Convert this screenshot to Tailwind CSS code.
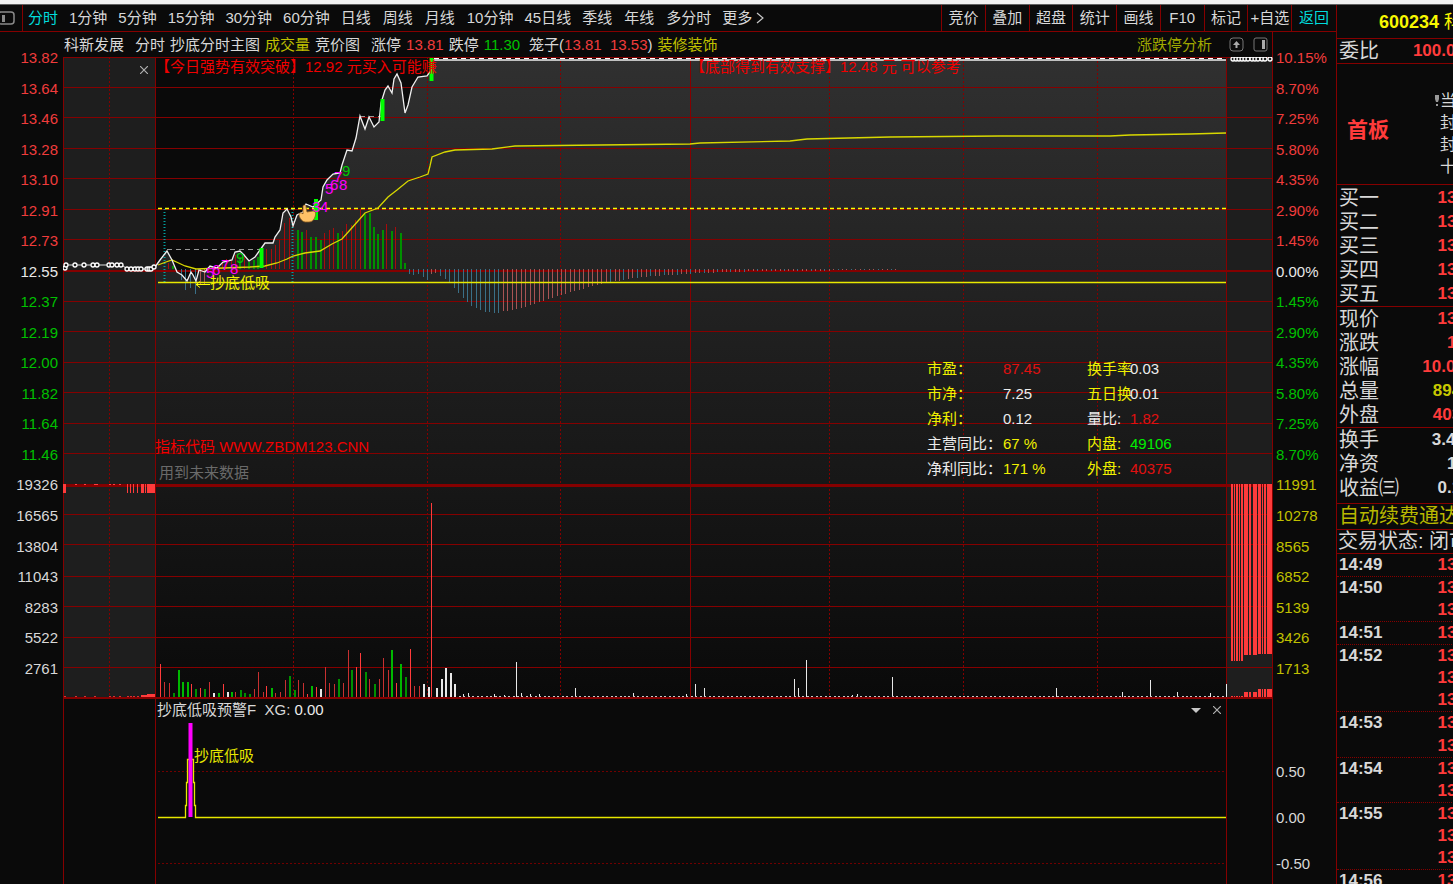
<!DOCTYPE html>
<html lang="zh-CN">
<head>
    <meta charset="UTF-8">
    <meta name="viewport" content="width=device-width, initial-scale=1.0">
    <title>科新发展 600234 - 分时</title>
    <script src="https://cdn.jsdelivr.net/npm/@tailwindcss/browser@4"></script>
</head>
<body class="h-screen overflow-hidden bg-[#0a0a0a] text-[#d8d8d8] text-[15px] leading-4 whitespace-nowrap font-['Liberation_Sans','Noto_Sans_CJK_SC',sans-serif]">
    <div class="h-full flex flex-col">
        <!-- Window edge -->
        <div class="h-[5px] shrink-0 bg-[#f0f0f0] border-b border-[#606060]"></div>

        <div class="flex-1 min-h-0 flex">
            <!-- Chart side -->
            <main class="flex-1 min-w-0 flex flex-col">
                <!-- Toolbar -->
                <header class="h-[27px] shrink-0 flex border-b border-[#850000]">
                    <button aria-label="侧栏" class="w-[23px] border-r border-[#850000]">
                        <svg class="w-[15px] h-[15px]" viewBox="0 0 15 15" fill="none" stroke="#8a8a8a"><rect x="-2" y="1" width="16" height="12" rx="3" stroke-width="1.5"/><rect x="2" y="4" width="3" height="7" fill="#8a8a8a" stroke="none"/></svg>
                    </button>
                    <nav class="flex items-center gap-[11px] pl-[5px]">
                        <button class="text-[#00dcdc]">分时</button>
                        <button>1分钟</button>
                        <button>5分钟</button>
                        <button>15分钟</button>
                        <button>30分钟</button>
                        <button>60分钟</button>
                        <button class="w-[31px] text-left">日线</button>
                        <button class="w-[31px] text-left">周线</button>
                        <button class="w-[31px] text-left">月线</button>
                        <button>10分钟</button>
                        <button>45日线</button>
                        <button class="w-[31px] text-left">季线</button>
                        <button class="w-[31px] text-left">年线</button>
                        <button>多分时</button>
                        <button class="flex items-center gap-1">更多
                            <svg class="w-2 h-3" viewBox="0 0 8 12" fill="none" stroke="#c8c8c8" stroke-width="1.2"><path d="M1 1l6 5-6 5"/></svg>
                        </button>
                    </nav>
                    <nav class="ml-auto w-[395px] grid grid-cols-9 divide-x divide-[#850000] border-l border-[#850000]">
                        <button>竞价</button>
                        <button>叠加</button>
                        <button>超盘</button>
                        <button>统计</button>
                        <button>画线</button>
                        <button>F10</button>
                        <button>标记</button>
                        <button>+自选</button>
                        <button class="text-[#00dcdc]">返回</button>
                    </nav>
                </header>

                <!-- Indicator names -->
                <div class="h-[25px] shrink-0 flex">
                    <div class="flex-1 flex items-center pl-16 pr-1 gap-[5px]">
                        <span>科新发展</span>
                        <span class="ml-[6px]">分时</span>
                        <span>抄底分时主图</span>
                        <span class="text-[#c0c000]">成交量</span>
                        <span>竞价图</span>
                        <span class="ml-[6px]">涨停</span>
                        <span class="text-[#f03c3c]">13.81</span>
                        <span>跌停</span>
                        <span class="text-[#00c000]">11.30</span>
                        <span class="ml-1">笼子(<span class="text-[#f03c3c]">13.81&nbsp; 13.53</span>)</span>
                        <span class="text-[#c0c000]">装修装饰</span>
                        <a href="#" class="ml-auto text-[#a0a800]">涨跌停分析</a>
                        <button aria-label="上移" class="ml-3">
                            <svg class="w-[15px] h-[15px]" viewBox="0 0 15 15"><rect x="1" y="1" width="13" height="13" rx="3" fill="none" stroke="#777"/><path d="M7.5 4l3.500 4H8.500v3h-2V8H4z" fill="#aaa"/></svg>
                        </button>
                        <button aria-label="右栏" class="ml-1">
                            <svg class="w-[15px] h-[15px]" viewBox="0 0 15 15"><rect x="1" y="1" width="13" height="13" rx="2" fill="none" stroke="#777"/><rect x="9" y="3" width="3" height="9" fill="#aaa"/></svg>
                        </button>
                    </div>
                    <div class="w-16 border-l border-[#850000]"></div>
                </div>

                <!-- Price and volume -->
                <section class="flex-[641] min-h-0 grid grid-cols-[63px_1fr_63px] grid-rows-[minmax(0,1fr)]">
                    <ol class="-mt-[7px] mb-[7px] pr-[5px] flex flex-col text-right text-[#f03c3c] *:flex-1">
                        <li>13.82</li>
                        <li>13.64</li>
                        <li>13.46</li>
                        <li>13.28</li>
                        <li>13.10</li>
                        <li>12.91</li>
                        <li>12.73</li>
                        <li class="text-[#e8e8e8]">12.55</li>
                        <li class="text-[#00c000]">12.37</li>
                        <li class="text-[#00c000]">12.19</li>
                        <li class="text-[#00c000]">12.00</li>
                        <li class="text-[#00c000]">11.82</li>
                        <li class="text-[#00c000]">11.64</li>
                        <li class="text-[#00c000]">11.46</li>
                        <li class="text-[#d8d8d8]">19326</li>
                        <li class="text-[#d8d8d8]">16565</li>
                        <li class="text-[#d8d8d8]">13804</li>
                        <li class="text-[#d8d8d8]">11043</li>
                        <li class="text-[#d8d8d8]">8283</li>
                        <li class="text-[#d8d8d8]">5522</li>
                        <li class="text-[#d8d8d8]">2761</li>
                    </ol>

                    <div class="relative">
                        <svg class="absolute inset-0 w-full h-full" viewBox="63 57 1210 641" preserveAspectRatio="none">
                            <defs>
                                <linearGradient id="area" gradientUnits="userSpaceOnUse" x1="0" y1="57" x2="0" y2="698">
                                    <stop offset="0" stop-color="#303030"/>
                                    <stop offset="0.450" stop-color="#1f1f1f"/>
                                    <stop offset="1" stop-color="#0a0a0a"/>
                                </linearGradient>
                            </defs>
                            <rect x="63" y="57" width="92" height="641" fill="#1e1e1e"/>
                            <rect x="1227" y="57" width="46" height="641" fill="#1e1e1e"/>
                            <path id="fill" fill="url(#area)"/>
                            <g id="grid" fill="#850000" shape-rendering="crispEdges"></g>
                            <g id="bars" shape-rendering="crispEdges"></g>

                            <!-- levels -->
                            <path d="M164.500 209v74M292.500 209v74" stroke="#00a0a0" stroke-width="2" stroke-dasharray="1 2"/>
                            <path d="M167 249.500h95M360 116.500h22" stroke="#999" stroke-dasharray="5 4"/>
                            <path d="M158 208.500h1068" stroke="#ffff00" stroke-width="1.300" stroke-dasharray="4 3"/>
                            <path d="M158 282.500h1068" stroke="#e8e800" stroke-width="1.500"/>

                            <!-- average and price -->
                            <polyline fill="none" stroke="#d8d800" stroke-width="1.300" points="158,265 166,262 172,260 185,266 196,269 250,267 265,266 277,263 287,259 293,256 305,253 320,251 332,244 342,239 350,230 358,221 365,213 378,208 388,197 397,190 408,181 420,177 428,174 430,166 432,157 445,152 455,150 492,149 515,146 600,145 690,144 700,143 790,141 807,139 890,137 1000,136 1110,136 1130,135 1190,134 1226,133"/>
                            <polyline id="price" fill="none" stroke="#f0f0f0" stroke-width="1.300" points="155,267 160,260 167,251 172,260 177,272 182,275 187,281 191,272 193,275 196,281 199,270 205,272 210,266 217,268 223,262 232,260 235,252 240,251 244,255 249,261 255,257 260,250 265,243 273,243 275,237 280,230 283,213 287,209 291,217 293,226 297,215 303,212 306,204 313,207 321,200 323,187 327,180 333,174 340,173 342,165 347,150 352,151 356,138 360,116 365,129 369,117 374,127 379,122 381,103 385,90 388,86 392,93 394,79 397,74 401,83 405,113 408,105 412,87 418,77 427,76 430,72 432,60 1226,60"/>
                            <path d="M434 58.500h792" stroke="#fff" stroke-dasharray="5 4"/>
                            <polyline fill="none" stroke="#e0e0e0" points="63,269 66,265 122,265 127,269 151,269 155,266"/>
                            <g id="auction" fill="#1e1e1e" stroke="#fff" stroke-width="1.300"></g>

                            <!-- signals -->
                            <path d="M261.500 248v20M316 199v21M382.500 99v22M431.500 58v23" stroke="#00ff00" stroke-width="4"/>
                            <g fill="#ff00ff" font-size="15">
                                <text x="206" y="278">5</text>
                                <text x="212" y="275">6</text>
                                <text x="221" y="270">7</text>
                                <text x="230" y="274">8</text>
                                <text x="312" y="212">3</text>
                                <text x="320" y="212">4</text>
                                <text x="325" y="194">5</text>
                                <text x="330" y="190">6</text>
                                <text x="334" y="182">7</text>
                                <text x="339" y="190">8</text>
                            </g>
                            <g fill="#00c800" font-size="15">
                                <text x="236" y="263">9</text>
                                <text x="342" y="176">9</text>
                            </g>
                            <path d="M196 284.500h14M196 284.500l4-3M196 284.500l4 3" fill="none" stroke="#ffff00"/>
                            <path d="M303 206c1-2 3-1 3 1l1 5 6-1c3 0 3 3 2 6s-3 5-6 5h-4c-4-1-6-5-6-8 1-2 3-1 4 0z" fill="#ffc266" stroke="#8a5a20" stroke-width="0.800"/>
                        </svg>

                        <button aria-label="关闭" class="absolute left-[76px] top-2 p-[1px]">
                            <svg class="w-2 h-2" viewBox="0 0 8 8" stroke="#b0b0b0" stroke-width="1.2"><path d="M0 0l8 8M8 0l-8 8"/></svg>
                        </button>
                        <p class="absolute left-[92px] top-[2px] text-[#f00000]">【今日强势有效突破】12.92 元买入可能赚</p>
                        <p class="absolute left-[627px] top-[2px] text-[#f00000]">【底部得到有效支撑】12.48 元 可以参考</p>
                        <p class="absolute left-[147px] top-[218px] text-[#f0f000]">抄底低吸</p>
                        <p class="absolute left-[92px] top-[382px] text-[#f00000]">指标代码 WWW.ZBDM123.CNN</p>
                        <p class="absolute left-24 top-[408px] text-[#6a6a6a]">用到未来数据</p>

                        <table class="absolute left-[864px] top-[299px] w-[245px] table-fixed text-[#ececec] [&_td]:p-0 [&_th]:p-0 [&_th]:font-normal [&_th]:text-left [&_tr]:h-[25px]">
                            <colgroup><col class="w-[76px]"><col class="w-[84px]"><col class="w-[43px]"><col class="w-[42px]"></colgroup>
                            <tbody>
                                <tr><th class="text-[#f0f000]">市盈：</th><td class="text-[#e01010]">87.45</td><th class="text-[#f0f000]">换手率</th><td>0.03</td></tr>
                                <tr><th class="text-[#f0f000]">市净：</th><td>7.25</td><th class="text-[#f0f000]">五日换</th><td>0.01</td></tr>
                                <tr><th class="text-[#f0f000]">净利：</th><td>0.12</td><th>量比:</th><td class="text-[#e01010]">1.82</td></tr>
                                <tr><th>主营同比：</th><td class="text-[#f0f000]">67 %</td><th class="text-[#f0f000]">内盘:</th><td class="text-[#00f000]">49106</td></tr>
                                <tr><th>净利同比：</th><td class="text-[#f0f000]">171 %</td><th class="text-[#f0f000]">外盘:</th><td class="text-[#e01010]">40375</td></tr>
                            </tbody>
                        </table>
                    </div>

                    <ol class="-mt-[7px] mb-[7px] pl-[3px] flex flex-col text-[#f03c3c] *:flex-1">
                        <li>10.15%</li>
                        <li>8.70%</li>
                        <li>7.25%</li>
                        <li>5.80%</li>
                        <li>4.35%</li>
                        <li>2.90%</li>
                        <li>1.45%</li>
                        <li class="text-[#e8e8e8]">0.00%</li>
                        <li class="text-[#00c000]">1.45%</li>
                        <li class="text-[#00c000]">2.90%</li>
                        <li class="text-[#00c000]">4.35%</li>
                        <li class="text-[#00c000]">5.80%</li>
                        <li class="text-[#00c000]">7.25%</li>
                        <li class="text-[#00c000]">8.70%</li>
                        <li class="text-[#c0c000]">11991</li>
                        <li class="text-[#c0c000]">10278</li>
                        <li class="text-[#c0c000]">8565</li>
                        <li class="text-[#c0c000]">6852</li>
                        <li class="text-[#c0c000]">5139</li>
                        <li class="text-[#c0c000]">3426</li>
                        <li class="text-[#c0c000]">1713</li>
                    </ol>
                </section>

                <!-- Alert indicator -->
                <section class="flex-[186] min-h-0 grid grid-cols-[63px_1fr_63px] grid-rows-[minmax(0,1fr)]">
                    <div></div>
                    <div class="relative overflow-hidden">
                        <svg class="absolute inset-0 w-full h-full" viewBox="63 698 1210 186" preserveAspectRatio="none">
                            <path d="M63 698.500h1210M63.500 698v186M155.500 698v186M1226.500 698v186M1272.500 698v186" fill="none" stroke="#850000" shape-rendering="crispEdges"/>
                            <path d="M158 771.500h1068M158 863.500h1068" stroke="#700000" stroke-dasharray="2 2"/>
                            <path d="M158 817.500h27.500v-12h1v-23h1v-23h6v23h1v23h1v12H1226" fill="none" stroke="#e8e800" stroke-width="1.300"/>
                            <path d="M190.500 723v94" stroke="#ff00ff" stroke-width="4"/>
                        </svg>
                        <div class="relative flex items-center pt-1 pl-[94px] pr-[52px]">
                            <span>抄底低吸预警F&nbsp; XG: <span class="text-[#ececec]">0.00</span></span>
                            <button aria-label="菜单" class="ml-auto">
                                <svg class="w-[10px] h-[5px]" viewBox="0 0 10 5"><path d="M0 0h10L5 5z" fill="#c8c8c8"/></svg>
                            </button>
                            <button aria-label="关闭" class="ml-3">
                                <svg class="w-2 h-2" viewBox="0 0 8 8" stroke="#b0b0b0" stroke-width="1.2"><path d="M0 0l8 8M8 0l-8 8"/></svg>
                            </button>
                        </div>
                        <p class="absolute left-[131px] top-[50px] text-[#e8e800]">抄底低吸</p>
                    </div>
                    <ol class="pt-[66px] pl-[3px] *:h-[46px]">
                        <li>0.50</li>
                        <li>0.00</li>
                        <li>-0.50</li>
                    </ol>
                </section>
            </main>

            <!-- Quote side -->
            <aside class="w-[117px] shrink-0 overflow-hidden border-l border-[#850000]">
                <div class="w-[143px] text-[20px] leading-6 divide-y divide-[#850000] [&_dd]:text-[17px] [&_dd]:font-bold [&_dl>div]:flex [&_dl>div]:justify-between [&_dl]:pl-[2px]">
                    <h1 class="h-[34px] pl-[42px] pt-[5px] text-[18px] font-bold text-[#f8f800]">600234 <span class="font-normal">科新发展</span></h1>
                    <dl class="h-[25px]">
                        <div><dt>委比</dt><dd class="text-[#ff3b3b]">100.00%</dd></div>
                    </dl>
                    <div class="h-[121px] flex items-center pl-[10px] text-[#ff3b3b]">
                        <strong class="text-[21px] pt-3">首板</strong>
                        <ul class="ml-[46px] pt-5 flex text-[16px] leading-[22px] text-[#d8d8d8]">
                            <li class="w-[5px]"><svg class="mt-1 w-1 h-3" viewBox="0 0 4 12" fill="#999"><path d="M0 1h4v4L3 8H1L0 5zM1 10h2v2H1z"/></svg></li>
                            <li>当<br>封<br>封<br>十</li>
                        </ul>
                    </div>
                    <dl class="pt-[1px]">
                        <div><dt>买一</dt><dd class="text-[#ff3b3b]">13.81</dd></div>
                        <div><dt>买二</dt><dd class="text-[#ff3b3b]">13.80</dd></div>
                        <div><dt>买三</dt><dd class="text-[#ff3b3b]">13.79</dd></div>
                        <div><dt>买四</dt><dd class="text-[#ff3b3b]">13.78</dd></div>
                        <div><dt>买五</dt><dd class="text-[#ff3b3b]">13.77</dd></div>
                    </dl>
                    <dl>
                        <div><dt>现价</dt><dd class="text-[#ff3b3b]">13.81</dd></div>
                        <div><dt>涨跌</dt><dd class="text-[#ff3b3b]">1.26</dd></div>
                        <div><dt>涨幅</dt><dd class="text-[#ff3b3b]">10.04%</dd></div>
                        <div><dt>总量</dt><dd class="text-[#c8c800]">89481</dd></div>
                        <div><dt>外盘</dt><dd class="text-[#ff3b3b]">40375</dd></div>
                    </dl>
                    <dl class="h-[76px]">
                        <div><dt>换手</dt><dd>3.47%</dd></div>
                        <div><dt>净资</dt><dd>1.78</dd></div>
                        <div><dt>收益㈢</dt><dd>0.120</dd></div>
                    </dl>
                    <p class="h-[26px] pl-[2px] text-[#b8b800]">自动续费通达信</p>
                    <p class="h-6 pl-[1px] leading-[22px]">交易状态: 闭市</p>
                    <!-- Ticks -->
                    <table class="w-full h-[338px] text-[17px] leading-5 font-bold [&_td]:p-0 [&_td]:pl-[2px] [&_td+td]:text-right [&_td+td]:text-[#ff3b3b]">
                        <tbody>
                            <tr><td>14:49</td><td>13.81</td></tr>
                        </tbody>
                        <tbody class="border-t border-dotted border-[#850000]">
                            <tr><td>14:50</td><td>13.81</td></tr>
                            <tr><td></td><td>13.81</td></tr>
                        </tbody>
                        <tbody class="border-t border-dotted border-[#850000]">
                            <tr><td>14:51</td><td>13.81</td></tr>
                        </tbody>
                        <tbody class="border-t border-dotted border-[#850000]">
                            <tr><td>14:52</td><td>13.81</td></tr>
                            <tr><td></td><td>13.81</td></tr>
                            <tr><td></td><td>13.81</td></tr>
                        </tbody>
                        <tbody class="border-t border-dotted border-[#850000]">
                            <tr><td>14:53</td><td>13.81</td></tr>
                            <tr><td></td><td>13.81</td></tr>
                        </tbody>
                        <tbody class="border-t border-dotted border-[#850000]">
                            <tr><td>14:54</td><td>13.81</td></tr>
                            <tr><td></td><td>13.81</td></tr>
                        </tbody>
                        <tbody class="border-t border-dotted border-[#850000]">
                            <tr><td>14:55</td><td>13.81</td></tr>
                            <tr><td></td><td>13.81</td></tr>
                            <tr><td></td><td>13.81</td></tr>
                        </tbody>
                        <tbody class="border-t border-dotted border-[#850000]">
                            <tr><td>14:56</td><td>13.81</td></tr>
                        </tbody>
                    </table>
                </div>
            </aside>
        </div>
    </div>

    <script>
        const NS = 'http://www.w3.org/2000/svg';
        function add(parent, tag, attrs) {
            const el = document.createElementNS(NS, tag);
            for (const k in attrs) el.setAttribute(k, attrs[k]);
            document.getElementById(parent).appendChild(el);
        }
        function bar(x, top, bottom, fill, w = 1) {
            add('bars', 'rect', { x: x, y: top, width: w, height: bottom - top, fill: fill });
        }

        // area under the price line
        const pts = document.getElementById('price').getAttribute('points');
        document.getElementById('fill').setAttribute('d', 'M' + pts + ' L1226,698 L155,698Z');

        // grid
        [57, 87, 117, 148, 178, 209, 239, 301, 331, 362, 392, 423, 453, 514, 544, 576, 606, 637, 667, 697]
            .forEach(y => add('grid', 'rect', { x: 63, y: y, width: 1210, height: 1 }));
        [[270, 2], [484, 3]].forEach(([y, h]) => add('grid', 'rect', { x: 63, y: y, width: 1210, height: h }));
        [63, 155, 690, 1226, 1272].forEach(x => add('grid', 'rect', { x: x, y: 57, width: 1, height: 641 }));
        [109, 293, 427, 560, 829, 963, 1097].forEach(x =>
            add('grid', 'path', { d: `M${x}.5 57v641`, stroke: '#850000', 'stroke-dasharray': '2 2' }));

        const color = { r: '#c83030', R: '#ff3b3b', g: '#009000', G: '#00b800', W: '#e8e8e8', d: '#a80c0c', b: '#3a7088', p: '#a85454' };

        // momentum bars, x / end y / colour
        [[168, 263, 'd'], [172, 266, 'g'], [181, 280, 'b'], [185, 290, 'b'], [190, 288, 'b'], [195, 294, 'b'], [200, 285, 'p'], [204, 284, 'p'],
         [217, 266, 'd'], [222, 262, 'd'], [226, 259, 'd'], [231, 261, 'd'], [235, 255, 'd'], [239, 257, 'g'], [244, 254, 'd'], [248, 262, 'g'], [253, 260, 'g'], [257, 257, 'g'],
         [266, 249, 'd'], [271, 249, 'd'], [275, 245, 'd'], [279, 240, 'd'], [284, 223, 'd'], [289, 218, 'd'], [297, 230, 'g'], [301, 232, 'g'],
         [306, 230, 'd'], [310, 237, 'g'], [315, 237, 'g'], [320, 240, 'g'], [324, 233, 'd'], [329, 230, 'd'], [333, 228, 'd'], [337, 233, 'g'],
         [342, 231, 'd'], [346, 224, 'd'], [351, 225, 'd'], [355, 220, 'd'], [360, 209, 'd'], [364, 214, 'g'], [369, 213, 'g'], [373, 227, 'g'],
         [377, 234, 'g'], [382, 230, 'g'], [386, 224, 'd'], [391, 231, 'g'], [395, 227, 'd'], [400, 233, 'g'], [404, 263, 'g'],
         [409, 274, 'b'], [413, 275, 'b'], [418, 274, 'b'], [423, 277, 'b'], [427, 280, 'b'], [431, 274, 'p'], [435, 273, 'p'], [440, 276, 'b'],
         [445, 279, 'b'], [449, 282, 'b'], [454, 288, 'b'], [458, 293, 'b'], [463, 298, 'b'], [467, 302, 'b'], [471, 306, 'b'], [476, 308, 'b'],
         [480, 310, 'b'], [485, 312, 'b'], [489, 312, 'b'], [494, 313, 'b'], [498, 313, 'b']]
            .forEach(([x, y, c]) => bar(x, Math.min(y, 269), Math.max(y, 269), color[c], c === 'g' ? 2 : 1));

        const decay = [[500, 312], [525, 307], [560, 295], [600, 284], [640, 277], [700, 273], [760, 271], [900, 270]];
        for (let i = 0; i < 89; i++) {
            const x = Math.round(503 + i * 4.46);
            const k = Math.max(0, decay.findIndex(p => p[0] > x) - 1);
            const [x0, y0] = decay[k], [x1, y1] = decay[k + 1];
            bar(x, 269, y0 + (y1 - y0) * (x - x0) / (x1 - x0), x > 600 && i % 3 === 0 ? color.b : color.p);
        }

        // volume
        [[160, 664, 'R'], [164, 682, 'r'], [169, 683, 'r'], [173, 693, 'g'], [178, 670, 'G'], [182, 682, 'G'], [187, 682, 'G'], [191, 684, 'R'],
         [195, 689, 'g'], [200, 688, 'R'], [204, 689, 'g'], [209, 682, 'r'], [213, 693, 'W'], [218, 693, 'G'], [223, 684, 'R'], [227, 692, 'W'],
         [231, 692, 'G'], [235, 692, 'r'], [240, 690, 'g'], [244, 693, 'g'], [249, 694, 'g'], [254, 689, 'r'], [258, 672, 'r'], [263, 692, 'r'],
         [266, 686, 'R'], [271, 688, 'G'], [275, 693, 'r'], [280, 692, 'r'], [285, 680, 'r'], [289, 676, 'g'], [294, 690, 'g'], [298, 680, 'r'],
         [303, 683, 'r'], [307, 694, 'R'], [311, 686, 'G'], [316, 687, 'R'], [320, 689, 'W'], [325, 667, 'r'], [329, 683, 'r'], [334, 684, 'r'],
         [338, 679, 'g'], [343, 683, 'r'], [348, 650, 'r'], [351, 670, 'g'], [356, 667, 'R'], [360, 653, 'R'], [365, 672, 'g'], [369, 679, 'r'],
         [374, 684, 'g'], [379, 679, 'r'], [383, 658, 'r'], [388, 670, 'r'], [391, 650, 'G'], [396, 683, 'R'], [400, 664, 'G'], [405, 677, 'g'],
         [410, 649, 'R'], [414, 686, 'r'], [419, 686, 'r'], [423, 684, 'W'], [428, 687, 'W'], [431, 503, 'R'], [436, 688, 'W'], [441, 679, 'W'],
         [445, 668, 'W'], [450, 673, 'W'], [454, 684, 'W'], [463, 694, 'W'], [468, 693, 'W'], [494, 694, 'W'], [504, 695, 'W'], [516, 662, 'W'],
         [521, 693, 'W'], [530, 694, 'W'], [539, 694, 'W'], [575, 688, 'W'], [633, 693, 'W'], [686, 694, 'W'], [695, 684, 'W'], [704, 688, 'W'],
         [794, 679, 'W'], [798, 688, 'W'], [806, 660, 'W'], [852, 695, 'W'], [857, 694, 'W'], [892, 677, 'W'], [1056, 688, 'W'], [1122, 692, 'W'],
         [1150, 680, 'W'], [1177, 692, 'W'], [1210, 693, 'W'], [1226, 684, 'W']]
            .forEach(([x, y, c]) => bar(x, y, 697, color[c], c === 'g' || c === 'G' ? 2 : x < 460 && c === 'W' ? 2 : 1));
        for (let x = 459; x < 1226; x += 4.46) bar(Math.round(x), 696, 697, '#c8c8c8', 2);

        // call auction volume, before open and at close
        [[63, 3], [127, 1], [130, 1], [133, 1], [137, 1], [141, 3], [145, 1], [147, 8]].forEach(([x, w]) => bar(x, 484, 493, '#ff3b3b', w));
        [75, 84, 94, 96, 109, 113, 119].forEach(x => bar(x, 484, 485, '#ff3b3b', 2));
        [64, 75, 84, 94, 109, 113, 119, 127, 130, 133, 137].forEach(x => bar(x, 696, 697, '#d83030', 2));
        bar(141, 695, 697, '#ff3b3b', 14);
        bar(147, 694, 697, '#ff3b3b', 8);
        [[1231, 2, 661], [1234, 1, 661], [1236, 2, 661], [1239, 1, 661], [1241, 2, 661], [1244, 4, 655], [1249, 2, 655], [1253, 4, 655],
         [1258, 3, 654], [1262, 1, 654], [1264, 2, 654], [1267, 5, 654]].forEach(([x, w, y]) => {
            bar(x, 484, y, '#ff3b3b', w);
            bar(x, y > 660 ? 696 : y > 654 ? 692 : 689, 697, '#ff3b3b', w);
        });

        // call auction prices
        [[65, 268], [66, 265], [75, 265], [84, 265], [93, 265], [97, 265], [109, 265], [112, 265], [117, 265], [121, 265], [127, 269],
         [131, 269], [135, 269], [138, 269], [141, 269], [147, 269], [149, 269], [151, 269], [154, 267],
         [1233, 59], [1236, 59], [1239, 59], [1242, 59], [1245, 59], [1248, 59], [1252, 59], [1255, 59], [1258, 59], [1262, 59], [1265, 59], [1270, 59]]
            .forEach(([x, y]) => add('auction', 'circle', { cx: x, cy: y, r: 2 }));
    </script>
</body>
</html>
